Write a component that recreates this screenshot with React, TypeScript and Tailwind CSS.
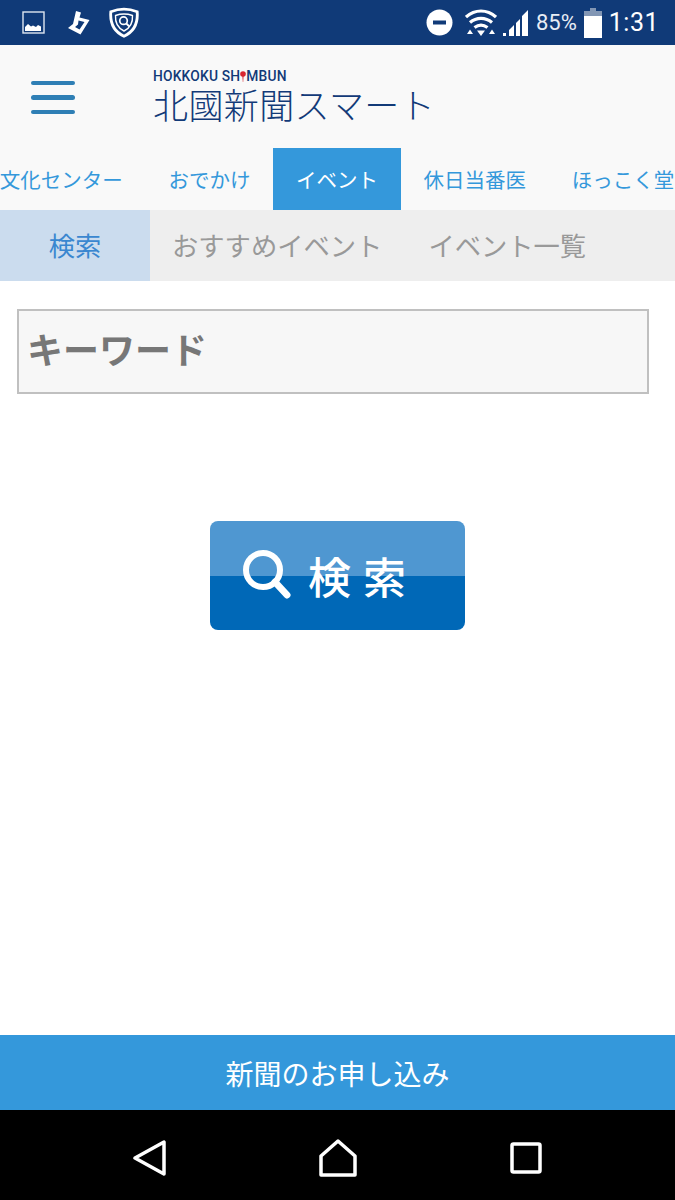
const cjk = "font-['Noto_Sans_CJK_JP','Noto_Sans',sans-serif]";

const navItems = ["文化センター", "おでかけ", "イベント", "休日当番医", "ほっこく堂"];

function PictureIcon() {
  return (
    <svg width="24" height="24" viewBox="0 0 24 24" className="mr-[22px] shrink-0">
      <rect x="1" y="1" width="21" height="21" fill="none" stroke="#dfe6f0" strokeWidth="1.4" />
      <path d="M3 20v-4l3-3 3 2.500 2-1 3 1.500 2-2 3 1.500v4.500z" fill="#fff" />
    </svg>
  );
}

function PlaystoreIcon() {
  return (
    <svg width="22" height="24" viewBox="0 0 22 24" className="mr-[18px] shrink-0">
      <path d="M8 0l5 1.500-1.500 5 10 2.500-9 14.500L0 17l5-4z" fill="#fff" />
      <path d="M10.500 9.500l6 1.500-5 7.500-4.500-2.500 3-2.500z" fill="#103a78" />
    </svg>
  );
}

function ShieldIcon() {
  return (
    <svg width="32" height="32" viewBox="0 0 34 34" className="shrink-0">
      <path d="M3 5c9-3.500 19-3.500 28 0 1 12-3 21-14 26C6 26 2 17 3 5z" fill="none" stroke="#fff" strokeWidth="3" />
      <path d="M8 9c6-2 12-2 18 0 .5 7-2 13-9 16.500C10 22 7.500 16 8 9z" fill="none" stroke="#fff" strokeWidth="1.500" />
      <circle cx="16.500" cy="14.500" r="4" fill="none" stroke="#fff" strokeWidth="1.800" />
      <path d="M19.500 17.500l3 3" stroke="#fff" strokeWidth="2" />
    </svg>
  );
}

function DndIcon() {
  return (
    <svg width="27" height="27" viewBox="0 0 27 27" className="shrink-0">
      <circle cx="13.500" cy="13.500" r="13" fill="#fff" />
      <rect x="7" y="11.500" width="13" height="4" fill="#103a78" />
    </svg>
  );
}

function WifiIcon() {
  return (
    <svg width="32" height="27" viewBox="0 0 32 27" className="shrink-0">
      <path d="M1 8c9-8 21-8 30 0M5 13.500c6.500-5.500 15.500-5.500 22 0M9.500 18.500c4-3 9-3 13 0" fill="none" stroke="#fff" strokeWidth="3.200" />
      <path d="M12 21.500h8L16 27z" fill="#fff" />
      <path d="M2 25l3-4.500 3 4.500zM24 25l3-4.500 3 4.500z" fill="#fff" />
    </svg>
  );
}

function SignalIcon() {
  return (
    <svg width="25" height="26" viewBox="0 0 25 26" className="shrink-0">
      <path d="M0 26h3v-3H0zM6 26h5V15l-5 5zM13 26h4V9l-4 4zM19 26h6V0l-6 6z" fill="#fff" />
    </svg>
  );
}

function BatteryIcon() {
  return (
    <svg width="18" height="30" viewBox="0 0 18 30" className="shrink-0">
      <path d="M6 0h6v3H6z" fill="#8296b4" />
      <path d="M0 3h18v6H0z" fill="#8296b4" />
      <path d="M0 8h18v22H0z" fill="#fff" />
    </svg>
  );
}

function StatusBar() {
  return (
    <div className="flex h-[45px] shrink-0 items-center bg-[#103a78] pl-[22px] pr-[16px] text-white">
      <PictureIcon />
      <PlaystoreIcon />
      <ShieldIcon />
      <div className="ml-auto flex items-center font-['Roboto',sans-serif]">
        <DndIcon />
        <div className="ml-[12px]"><WifiIcon /></div>
        <div className="ml-[6px]"><SignalIcon /></div>
        <span className="ml-[8px] text-[22px] leading-none text-[#e8edf5]">85%</span>
        <div className="ml-[7px]"><BatteryIcon /></div>
        <span className="ml-[7px] text-[25px] leading-none tracking-[0.5px]">1:31</span>
      </div>
    </div>
  );
}

function Header() {
  return (
    <div className="flex h-[103px] shrink-0 items-center bg-[#f9f9f9] pl-[31px]">
      <div className="mt-[2px] flex w-[44px] flex-col gap-[10px]">
        <div className="h-[4.500px] rounded-full bg-[#2f7fb5]" />
        <div className="h-[4.500px] rounded-full bg-[#2f7fb5]" />
        <div className="h-[4.500px] rounded-full bg-[#2f7fb5]" />
      </div>
      <div className={`ml-[78px] flex flex-col text-[#123a78] ${cjk}`}>
        <div className="mb-[1px] flex h-[13px] items-center font-['Roboto',sans-serif] text-[13.800px] font-medium leading-none tracking-[0.2px]">
          HOKKOKU SH
          <svg width="6" height="13" viewBox="0 0 6 13" className="shrink-0">
            <circle cx="3" cy="3" r="2.800" fill="#d9252f" />
            <path d="M2.400 5h1.200l-.4 6h-.4z" fill="#d9252f" />
          </svg>
          MBUN
        </div>
        <div className="text-[35px] font-light leading-[38px] tracking-[0.4px]">北國新聞スマート</div>
      </div>
    </div>
  );
}

function NavTabs() {
  return (
    <div className={`flex h-[62px] shrink-0 overflow-hidden whitespace-nowrap bg-[#f9f9f9] text-[20.500px] ${cjk}`}>
      <div className="-ml-[23px] flex">
        {navItems.map((item) => (
          <div
            key={item}
            className={
              item === "イベント"
                ? "flex items-center bg-[#3498db] px-[22.800px] text-white"
                : "flex items-center px-[22.800px] text-[#3498db]"
            }
          >
            {item}
          </div>
        ))}
      </div>
    </div>
  );
}

function SubTabs() {
  return (
    <div className={`flex h-[71px] shrink-0 bg-[#eeeeee] pb-[1px] text-[26.300px] ${cjk}`}>
      <div className="-mb-[1px] flex w-[150px] items-center justify-center bg-[#cbdcee] pb-[1px] text-[#3a87d0]">検索</div>
      <div className="flex items-center pl-[22px] pr-[23px] text-[#999999]">おすすめイベント</div>
      <div className="flex items-center pl-[23px] text-[#999999]">イベント一覧</div>
    </div>
  );
}

function SearchForm() {
  return (
    <div className="flex flex-1 flex-col bg-white">
      <div className="ml-[17px] mr-[26px] mt-[28px] flex h-[85px] items-center border-2 border-[#c0c0c0] bg-[#f7f7f7] pb-[7px] pl-[8px]">
        <span className={`text-[36px] font-bold text-[#777777] ${cjk}`}>キーワード</span>
      </div>
      <button className="mx-auto mt-[127px] flex h-[109px] w-[255px] items-center rounded-[8px] bg-[linear-gradient(#4f97d1_50%,#0068b7_50%)] pl-[33px]">
        <svg width="48" height="50" viewBox="0 0 48 50" className="mb-[3px] shrink-0">
          <circle cx="20" cy="21" r="17" fill="none" stroke="#fff" strokeWidth="6" />
          <path d="M32 33l12 13" stroke="#fff" strokeWidth="7" strokeLinecap="round" />
        </svg>
        <span className={`ml-[17px] text-[43px] font-medium leading-none tracking-[12px] text-white ${cjk}`}>検索</span>
      </button>
    </div>
  );
}

function BottomBar() {
  return (
    <div className={`flex h-[75px] shrink-0 items-center justify-center bg-[#3498db] text-[28px] text-white ${cjk}`}>
      新聞のお申し込み
    </div>
  );
}

function AndroidNav() {
  return (
    <div className="flex h-[90px] shrink-0 items-center bg-black pt-[6px] pl-[133px]">
      <svg width="34" height="36" viewBox="0 0 34 36">
        <path d="M31 2v32L2 18z" fill="none" stroke="#fff" strokeWidth="3.500" strokeLinejoin="round" />
      </svg>
      <svg width="38" height="38" viewBox="0 0 38 38" className="ml-[152px]">
        <path d="M2 36V17L19 2l17 15v19z" fill="none" stroke="#fff" strokeWidth="3.500" strokeLinejoin="round" />
      </svg>
      <svg width="32" height="32" viewBox="0 0 32 32" className="ml-[153px]">
        <rect x="2" y="2" width="28" height="28" rx="1.500" fill="none" stroke="#fff" strokeWidth="3.500" />
      </svg>
    </div>
  );
}

export default function App() {
  return (
    <div className="flex h-[1200px] w-[675px] flex-col overflow-hidden bg-white">
      <StatusBar />
      <Header />
      <NavTabs />
      <SubTabs />
      <SearchForm />
      <BottomBar />
      <AndroidNav />
    </div>
  );
}
